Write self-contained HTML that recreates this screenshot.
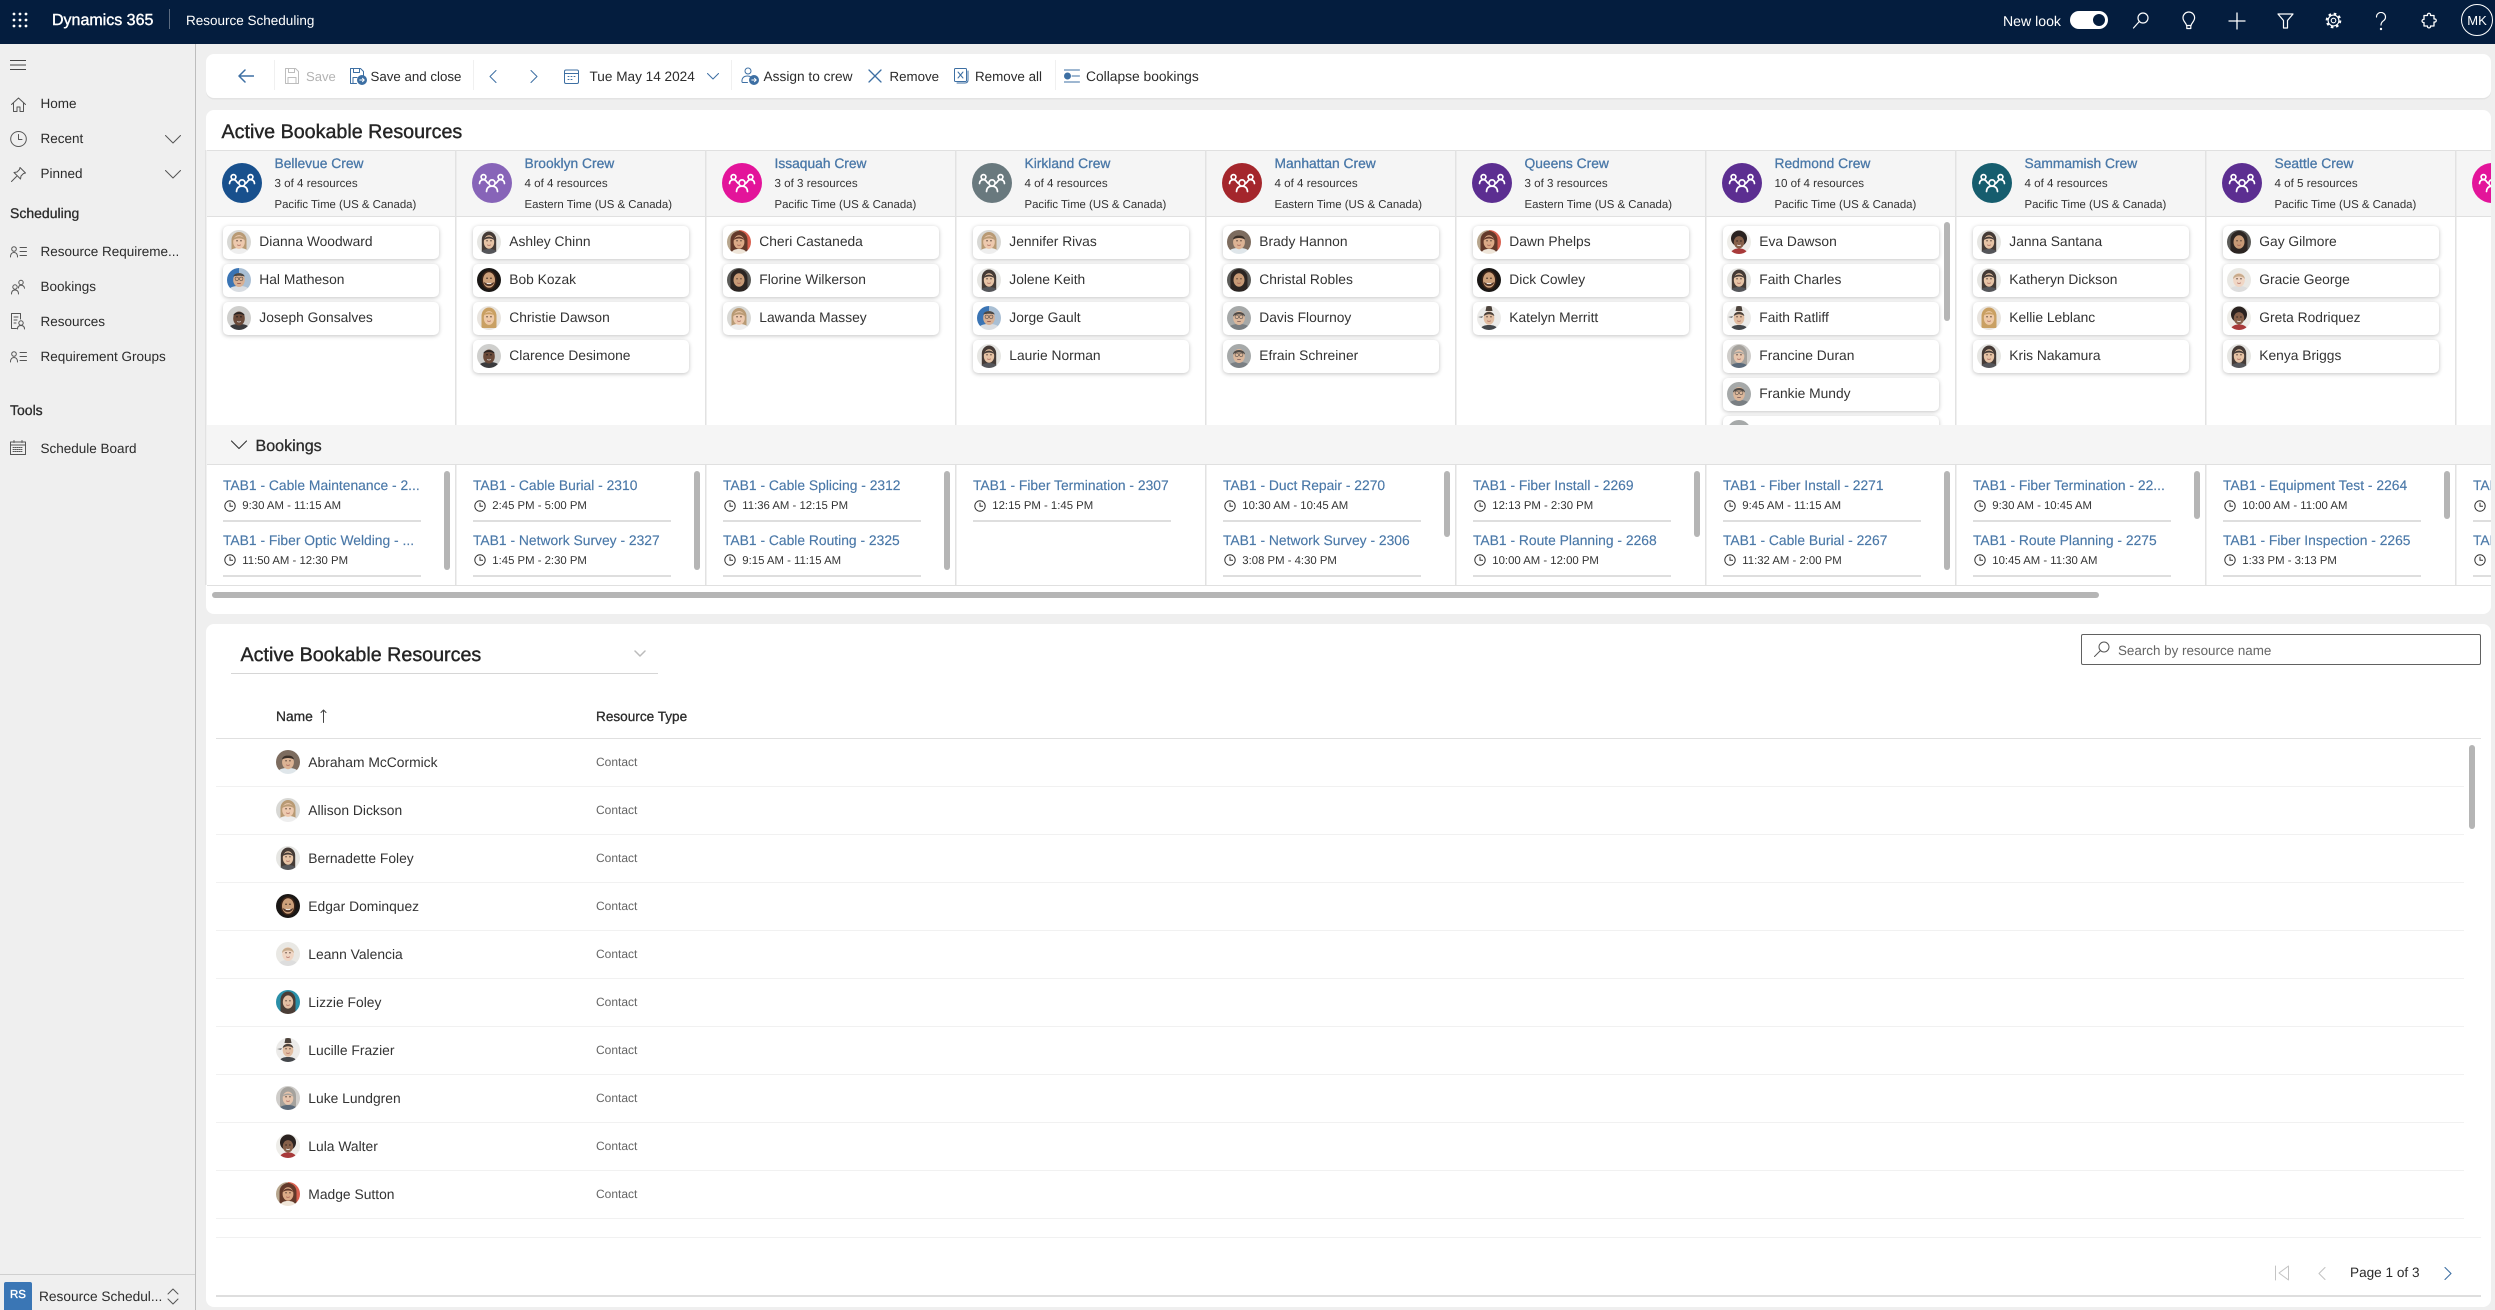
<!DOCTYPE html>
<html lang="en"><head><meta charset="utf-8"><title>Resource Scheduling</title>
<style>
html,body{margin:0;padding:0}
body{position:relative;width:2495px;height:1310px;overflow:hidden;background:#efefef;font-family:"Liberation Sans",sans-serif;color:#2b2b2b;text-rendering:geometricPrecision}
div,svg,span{position:absolute}
.t{white-space:nowrap;line-height:20px}
.sb{-webkit-text-stroke:.3px currentColor}
.n{font-size:13.5px;left:40.5px}
.tb{font-size:13.4px;top:66.5px}
.i{fill:none;stroke-linecap:round;stroke-linejoin:round}
.col{top:150px;width:250px;height:435px}
.ca{left:15px;top:13px;width:40px;height:40px;border-radius:50%}
.ca svg{left:0;top:0}
.cn{left:67.5px;top:3.5px;font-size:13.8px;color:#4a78a8}
.cr{left:67.5px;top:24px;font-size:11.6px;color:#333}
.cz{left:67.5px;top:44.5px;font-size:11.4px;color:#333}
.res{left:0;top:66px;width:248px;height:209px;overflow:hidden}
.card{left:15.5px;width:216px;height:33px;background:#fff;border-radius:5px;box-shadow:0 1px 4px rgba(0,0,0,.24)}
.av{width:24px;height:24px;clip-path:circle(50%);filter:blur(.35px)}
.card .av{left:4.5px;top:4px}
.card .t{left:36.8px;top:5.5px;font-size:13.8px;color:#333}
.bk{left:0;top:315px;width:250px;height:120px}
.bt{left:16px;font-size:13.85px;color:#4a78a8;-webkit-text-stroke:.15px currentColor}
.bd{left:35.3px;font-size:11.35px;color:#333}
.ck{left:17px;width:12px;height:12px}
.ru{left:16px;width:198px;height:2px;background:#dedede}
.sc{left:236.6px;top:6px;width:6px;background:#b5b5b5;border-radius:3px}
.hl{left:216px;width:2248px;height:1px;background:#f1f1f1}
.ra{left:276px}
.rn{left:308.3px;font-size:13.85px;color:#333}
.rt{left:596px;font-size:12px;color:#666}
</style></head><body>
<svg width="0" height="0" style="left:0;top:0">
<defs>
<g id="ey"><path d="M9.2 10.8h1.7M13.1 10.8h1.700" stroke="#4a362c" stroke-width=".8"/><path d="M10.200 14.800q1.800 1 3.600 0" stroke="#a0564f" stroke-width=".7" fill="none"/></g>
<g id="gl"><circle cx="9.800" cy="10.800" r="1.800" fill="none" stroke="#333" stroke-width=".5"/><circle cx="14.200" cy="10.800" r="1.800" fill="none" stroke="#333" stroke-width=".5"/></g>
<symbol id="gp" viewBox="0 0 40 40"><g fill="none" stroke="#fff" stroke-width="1.7" stroke-linecap="round"><circle cx="11.5" cy="14" r="2.4"/><circle cx="28.5" cy="14" r="2.4"/><circle cx="20" cy="20" r="3.1"/><path d="M7.5 20.5c.2-2.600 1.800-3.800 4-3.800 1.500 0 2.500.8 3.300 2.200l1.200 1.300M32.500 20.500c-.2-2.600-1.800-3.800-4-3.800-1.500 0-2.500.8-3.300 2.200L24 20.200M14.500 28.500c.2-3.500 2.200-5.300 5.500-5.300s5.300 1.800 5.500 5.300"/></g></symbol>
<symbol id="clk" viewBox="0 0 12 12"><circle cx="6" cy="6" r="5.200" fill="none" stroke="#333" stroke-width="1"/><path d="M6 2.800V6.300H9" fill="none" stroke="#333" stroke-width="1"/></symbol>
<symbol id="wl" viewBox="0 0 24 24"><rect width="24" height="24" fill="#d8d8d5"/><path d="M4.500 20V10a7.500 8 0 0 1 15 0v10z" fill="#b89a74"/><path d="M2 24c1-5 5-6 10-6s9 1 10 6z" fill="#eee"/><ellipse cx="12" cy="12" rx="5.800" ry="6.900" fill="#edc9ae"/><path d="M6.300 10c1-4.500 10-5.500 11.400 0-3.500-2.200-8-2.200-11.400 0z" fill="#b89a74"/><use href="#ey"/></symbol>
<symbol id="wp" viewBox="0 0 24 24"><rect width="24" height="24" fill="#e9e8e4"/><path d="M2 24c1-5 5-6 10-6s9 1 10 6z" fill="#ddd"/><ellipse cx="12" cy="12" rx="5.800" ry="7" fill="#f0d6c4"/><path d="M6 11c0-6.500 11-7.500 12 0-2.500-3-9-3.500-12 0z" fill="#c8ab8c"/><use href="#ey"/></symbol>
<symbol id="wy" viewBox="0 0 24 24"><rect width="24" height="24" fill="#e8e4df"/><path d="M4.500 22V10a7.500 8.500 0 0 1 15 0v12z" fill="#c9a063"/><ellipse cx="12" cy="12" rx="5.200" ry="6.900" fill="#eec9a6"/><path d="M6.800 9c2-3.500 8.500-3.500 10.400 0-2.500-1-8-1-10.400 0z" fill="#c9a063"/><use href="#ey"/></symbol>
<symbol id="wd" viewBox="0 0 24 24"><rect width="24" height="24" fill="#e6e6e3"/><path d="M4.800 21V9.500a7.200 8 0 0 1 14.400 0V21z" fill="#453b36"/><path d="M3 24c1-4 5-5 9-5s8 1 9 5z" fill="#55565a"/><ellipse cx="12" cy="12" rx="5.200" ry="6.800" fill="#e6c3a5"/><path d="M6.700 10c1-4.500 9-4.500 10.600 0-3.500-2-7-2-10.600 0z" fill="#453b36"/><use href="#ey"/></symbol>
<symbol id="wa" viewBox="0 0 24 24"><rect width="24" height="24" fill="#5b5b58"/><path d="M3.500 23V10a8.500 9 0 0 1 17 0v13z" fill="#2c2522"/><ellipse cx="12" cy="12" rx="5.500" ry="6.800" fill="#c79a76"/><use href="#ey"/></symbol>
<symbol id="wb" viewBox="0 0 24 24"><rect x="12" width="12" height="24" fill="#d9604f"/><rect width="12" height="24" fill="#b7a68e"/><path d="M3.500 22V10a8.500 9 0 0 1 17 0v12z" fill="#63392a"/><path d="M4 24c1-4 4-5 8-5s7 1 8 5z" fill="#efe5d8"/><ellipse cx="12" cy="12" rx="5.400" ry="6.700" fill="#dcaa87"/><path d="M6.800 10c1-4.500 9-4.500 10.400 0-3-2-7.400-2-10.400 0z" fill="#63392a"/><use href="#ey"/></symbol>
<symbol id="mg" viewBox="0 0 24 24"><rect width="12" height="24" fill="#3a74b4"/><rect x="12" width="12" height="24" fill="#a9bfd4"/><path d="M1 24c1-5 5-6 11-6s10 1 11 6z" fill="#d9dde2"/><ellipse cx="12" cy="12" rx="5.800" ry="7" fill="#d8b093"/><path d="M6.300 8.500c1-4.500 10.400-4.500 11.400 0-3.500-1-8-1-11.400 0z" fill="#4a4846"/><use href="#gl"/><path d="M10.200 15.200q1.800.8 3.600 0" stroke="#844" stroke-width=".7" fill="none"/></symbol>
<symbol id="mb" viewBox="0 0 24 24"><rect width="24" height="24" fill="#cfcfcd"/><path d="M1 24c1-5 5-6 11-6s10 1 11 6z" fill="#3a3a3c"/><ellipse cx="12" cy="12.500" rx="5.800" ry="7" fill="#6a4a39"/><path d="M6.300 9.500c1-4.500 10.400-4.500 11.400 0-3.500-2-8-2-11.400 0z" fill="#2a2422"/><path d="M9.200 10.800h1.700M13.100 10.800h1.700" stroke="#111" stroke-width=".8"/><path d="M10.200 15.500q1.800 1 3.600 0" stroke="#ddd" stroke-width=".8" fill="none"/></symbol>
<symbol id="mk" viewBox="0 0 24 24"><rect width="24" height="24" fill="#1a1715"/><ellipse cx="12" cy="12" rx="7.500" ry="9.500" fill="#3a2317"/><ellipse cx="12" cy="12" rx="6" ry="7.800" fill="#cda07a"/><path d="M6.800 14c1 5.500 9.400 5.500 10.400 0-2.500 2-8 2-10.400 0z" fill="#54382a"/><path d="M9.200 10.200h1.700M13.100 10.200h1.700" stroke="#201510" stroke-width=".8"/><path d="M9.600 15q2.400 1.500 4.800 0" stroke="#fff" stroke-width=".8" fill="none"/></symbol>
<symbol id="mo" viewBox="0 0 24 24"><rect width="24" height="24" fill="#a6a9a9"/><path d="M1 24c1-5 5-6 11-6s10 1 11 6z" fill="#7a7f83"/><ellipse cx="12" cy="12" rx="5.800" ry="7" fill="#dbb79b"/><path d="M6 10.500c.2-6 11.800-6 12 0-3.500-2.800-8.500-2.800-12 0z" fill="#4f4a46"/><use href="#gl"/><path d="M10.200 15.200q1.800.8 3.600 0" stroke="#755" stroke-width=".7" fill="none"/></symbol>
<symbol id="ma" viewBox="0 0 24 24"><rect width="24" height="24" fill="#7d6c5f"/><path d="M1 24c1-5 5-6 11-6s10 1 11 6z" fill="#dfe6ea"/><ellipse cx="12" cy="12.200" rx="5.900" ry="7" fill="#dcb394"/><path d="M6 9.500c.5-5.500 11.500-5.500 12 0-3.500-2-8.500-2-12 0z" fill="#3a2f28"/><use href="#ey"/></symbol>
<symbol id="ww" viewBox="0 0 24 24"><rect width="24" height="24" fill="#ecebe9"/><path d="M3 24c1-4 5-5 9-5s8 1 9 5z" fill="#44474b"/><path d="M8.500 5l1-5h5l1 5z" fill="#4c423b"/><path d="M1 11l5-1-1 2z" fill="#777"/><ellipse cx="12" cy="12" rx="5.300" ry="6.800" fill="#e2bea2"/><path d="M6.700 10c.5-5.500 10-5.500 10.600 0-3.500-2.400-7-2.400-10.600 0z" fill="#4c423b"/><use href="#ey"/></symbol>
<symbol id="wo" viewBox="0 0 24 24"><rect width="24" height="24" fill="#cfcdca"/><path d="M4 21V10a8 9 0 0 1 16 0v11z" fill="#a5a29d"/><path d="M2 24c2-4 6-5 10-5s8 1 10 5z" fill="#5b6a7a"/><ellipse cx="12" cy="12.200" rx="5.300" ry="6.600" fill="#e6c5ad"/><path d="M6.800 10.500c1-4 9-4 10.400 0-3.500-2-7-2-10.400 0z" fill="#a5a29d"/><use href="#ey"/></symbol>
<symbol id="ab" viewBox="0 0 24 24"><rect width="24" height="24" fill="#eeede9"/><path d="M3 24c2-5 6-5.500 9-5.500s7 .5 9 5.500z" fill="#a83a3a"/><circle cx="12" cy="8.500" r="8" fill="#2a2220"/><ellipse cx="12" cy="12.300" rx="5.200" ry="6.200" fill="#86604a"/><path d="M9.300 11h1.600M13.100 11h1.600" stroke="#111" stroke-width=".8"/><path d="M10.200 15q1.800 1 3.600 0" stroke="#fff" stroke-width=".8" fill="none"/></symbol>
<symbol id="tl" viewBox="0 0 24 24"><rect width="24" height="24" fill="#2a8fa8"/><path d="M4.500 24V10a7.500 8.500 0 0 1 15 0v14z" fill="#4a3d36"/><ellipse cx="12" cy="12" rx="5.200" ry="6.600" fill="#e3bfa4"/><use href="#ey"/></symbol>
</defs></svg>

<!-- top bar -->
<div style="left:0;top:0;width:2495px;height:44px;background:#041d3e"></div>
<svg style="left:12px;top:12px" width="16" height="16" viewBox="0 0 16 16" fill="#fff"><circle cx="2" cy="2" r="1.400"/><circle cx="8" cy="2" r="1.400"/><circle cx="14" cy="2" r="1.400"/><circle cx="2" cy="8" r="1.400"/><circle cx="8" cy="8" r="1.400"/><circle cx="14" cy="8" r="1.400"/><circle cx="2" cy="14" r="1.400"/><circle cx="8" cy="14" r="1.400"/><circle cx="14" cy="14" r="1.400"/></svg>
<div class="t" style="left:52px;top:10.500px;font-size:16px;color:#fff;-webkit-text-stroke:.4px #fff">Dynamics 365</div>
<div style="left:169px;top:9px;width:1px;height:20px;background:#5b6b80"></div>
<div class="t" style="left:186px;top:11px;font-size:13.500px;color:#fff">Resource Scheduling</div>
<div class="t" style="left:2003px;top:11px;font-size:14.100px;color:#fff">New look</div>
<div style="left:2070px;top:11px;width:38px;height:18px;background:#fff;border-radius:9px"></div>
<div style="left:2093px;top:14px;width:12px;height:12px;background:#041d3e;border-radius:50%"></div>
<svg class="i" style="left:2132px;top:11px" width="18" height="18" viewBox="0 0 18 18" stroke="#fff" stroke-width="1.200"><circle cx="11" cy="7" r="5"/><path d="M7.300 10.500L1.500 17"/></svg>
<svg class="i" style="left:2181px;top:11px" width="16" height="19" viewBox="0 0 16 19" stroke="#fff" stroke-width="1.200"><path d="M5.500 14.500C5.300 12 2 10.500 2 6.800a5.800 5.800 0 0 1 11.600 0c0 3.700-3.300 5.200-3.500 7.700zM5.800 14.500v3h4v-3"/></svg>
<svg class="i" style="left:2228px;top:12px" width="18" height="18" viewBox="0 0 18 18" stroke="#fff" stroke-width="1.300"><path d="M9 1v16M1 9h16"/></svg>
<svg class="i" style="left:2277px;top:13px" width="17" height="16" viewBox="0 0 17 16" stroke="#fff" stroke-width="1.200"><path d="M1 1h15l-5.500 6.500V15h-4V7.500z"/></svg>
<svg style="left:2325px;top:12px" width="17" height="17" viewBox="0 0 17 17" fill="none" stroke="#fff"><circle cx="8.500" cy="8.500" r="2.300" stroke-width="1.100"/><circle cx="8.500" cy="8.500" r="5.400" stroke-width="1.100"/><circle cx="8.500" cy="8.500" r="6.800" stroke-width="2" stroke-dasharray="2.600 2.740"/></svg>
<svg class="i" style="left:2375px;top:12px" width="12" height="19" viewBox="0 0 12 19" stroke="#fff" stroke-width="1.200"><path d="M1.500 5a4.500 4.500 0 1 1 7 3.700C6.800 10 6 11 6 13"/><circle cx="6" cy="17" r=".6"/></svg>
<svg class="i" style="left:2421px;top:12px" width="16" height="17" viewBox="0 0 16 17" stroke="#fff" stroke-width="1.300"><path d="M6.500 3.500c-.6-3 3.600-3 3 0H13V7c3-.6 3 3.600 0 3v4H9.500c.6 2.500-3.600 2.500-3 0H3v-3.500c-2.600.6-2.600-3.600 0-3V3.500z"/></svg>
<div style="left:2461px;top:4px;width:30px;height:30px;border:1.300px solid #fff;border-radius:50%"></div>
<div class="t" style="left:2461px;top:11px;width:32px;text-align:center;font-size:13px;color:#fff">MK</div>

<!-- sidebar -->
<div style="left:0;top:44px;width:195px;height:1266px;background:#efefef;border-right:1px solid #bdbdbd"></div>
<svg class="i" style="left:10px;top:60px" width="16" height="10" viewBox="0 0 16 10" stroke="#444" stroke-width="1"><path d="M0 .5h16M0 5h16M0 9.500h16"/></svg>
<svg class="i" style="left:11px;top:97px" width="15" height="15" viewBox="0 0 15 15" stroke="#555" stroke-width="1"><path d="M.5 7.500L7.500 1l7 6.500M2.500 6v8.500h3.500V10h3v4.500h3.500V6"/></svg>
<div class="t n" style="top:94px">Home</div>
<svg class="i" style="left:10px;top:131px" width="17" height="16" viewBox="0 0 17 16" stroke="#555" stroke-width="1"><ellipse cx="8.500" cy="8" rx="7.800" ry="7.500"/><path d="M8.500 3.500V8.500H12"/></svg>
<div class="t n" style="top:129px">Recent</div>
<svg class="i" style="left:165px;top:135px" width="16" height="9" viewBox="0 0 16 9" stroke="#555" stroke-width="1"><path d="M.5.5L8 8 15.500.5"/></svg>
<svg class="i" style="left:11px;top:167px" width="15" height="15" viewBox="0 0 15 15" stroke="#555" stroke-width="1"><path d="M9 .5l5.500 5.500-2 .5-2.500 2.500-.5 3L3 5.500l3-.5 2.500-2.500zM5.500 9.500L.5 14.500"/></svg>
<div class="t n" style="top:164px">Pinned</div>
<svg class="i" style="left:165px;top:170px" width="16" height="9" viewBox="0 0 16 9" stroke="#555" stroke-width="1"><path d="M.5.5L8 8 15.500.5"/></svg>
<div class="t sb" style="left:10px;top:203px;font-size:14px;color:#2b2b2b">Scheduling</div>
<svg class="i" style="left:10px;top:246px" width="17" height="12" viewBox="0 0 17 12" stroke="#555" stroke-width="1"><circle cx="4" cy="3" r="2.300"/><path d="M.5 11c0-3 1.500-4.500 3.500-4.500S7.500 8 7.500 11M10 1.500h6.500M10 5.500h6.500M10 9.500h6.500"/></svg>
<div class="t n" style="top:242px">Resource Requireme...</div>
<svg class="i" style="left:11px;top:279px" width="15" height="16" viewBox="0 0 15 16" stroke="#555" stroke-width="1"><circle cx="4" cy="8" r="2.200"/><circle cx="10" cy="3.500" r="2.200"/><path d="M.5 15c0-3 1.500-4 3.500-4s3.500 1 3.500 4M7.500 9c0-2 1-2.800 2.500-2.800s3.500 1 3.500 3"/></svg>
<div class="t n" style="top:277px">Bookings</div>
<svg class="i" style="left:11px;top:313px" width="15" height="17" viewBox="0 0 15 17" stroke="#555" stroke-width="1"><path d="M9.500 6V.5H.5v15h5M3 4h4M3 7h3M3 10h2"/><circle cx="10" cy="10" r="2.200"/><path d="M6.500 16c0-2.500 1.500-3.500 3.500-3.500s3.500 1 3.500 3.500"/></svg>
<div class="t n" style="top:312px">Resources</div>
<svg class="i" style="left:10px;top:351px" width="17" height="12" viewBox="0 0 17 12" stroke="#555" stroke-width="1"><circle cx="4" cy="3" r="2.300"/><path d="M.5 11c0-3 1.500-4.500 3.500-4.500S7.500 8 7.500 11M10 1.500h6.500M10 5.500h6.500M10 9.500h6.500"/></svg>
<div class="t n" style="top:347px">Requirement Groups</div>
<div class="t sb" style="left:10px;top:400px;font-size:14px;color:#2b2b2b">Tools</div>
<svg class="i" style="left:10px;top:440px" width="16" height="15" viewBox="0 0 16 15" stroke="#555" stroke-width="1"><path d="M.5 2h15v12.500H.5zM.5 5h15M4 .5v2M12 .5v2"/><path d="M3 7.500h10M3 9.500h10M3 11.500h10" stroke-dasharray="1 1"/></svg>
<div class="t n" style="top:439px">Schedule Board</div>
<div style="left:0;top:1274px;width:195px;height:1px;background:#cfcfcf"></div>
<div style="left:4px;top:1282px;width:28px;height:28px;background:#3a76b5;border-radius:2px 2px 0 0"></div>
<div class="t" style="left:4px;top:1285px;width:28px;text-align:center;font-size:11.500px;color:#fff;-webkit-text-stroke:.35px #fff">RS</div>
<div class="t" style="left:39px;top:1286.500px;font-size:13.700px">Resource Schedul...</div>
<svg class="i" style="left:167px;top:1288px" width="12" height="17" viewBox="0 0 12 17" stroke="#555" stroke-width="1"><path d="M1 6l5-5 5 5M1 11l5 5 5-5"/></svg>

<!-- toolbar card -->
<div style="left:206px;top:54px;width:2285px;height:44px;background:#fff;border-radius:8px;box-shadow:0 1.500px 0 #e3e3e3"></div>
<svg class="i" style="left:238px;top:69px" width="16" height="14" viewBox="0 0 16 14" stroke="#3d6fa3" stroke-width="1.500"><path d="M7 1L1 7l6 6M1 7h14.500"/></svg>
<div style="left:274px;top:60px;width:1px;height:30px;background:#f0f0f0"></div>
<svg class="i" style="left:285px;top:68px" width="14" height="16" viewBox="0 0 14 16" stroke="#bdbdbd" stroke-width="1"><path d="M.5.5h10l3 3v12H.5zM3.500.5v4h6v-4M3 15.500v-6h8v6"/></svg>
<div class="t tb" style="left:306px;font-size:13.100px;color:#b3b3b3">Save</div>
<svg class="i" style="left:350px;top:68px" width="17" height="17" viewBox="0 0 17 17" stroke="#3d6fa3" stroke-width="1"><path d="M.5.5h10l3 3v5M.5.500v15h6M3.500.5v4h6v-4M3 15.500v-6h4"/><circle cx="12" cy="12" r="4.500" fill="#3d6fa3"/><path d="M9.800 12h4.200M12.500 10.300L14.200 12l-1.700 1.700" stroke="#fff"/></svg>
<div class="t tb" style="left:370.500px;font-size:13.300px">Save and close</div>
<div style="left:473px;top:60px;width:1px;height:30px;background:#f0f0f0"></div>
<svg class="i" style="left:489px;top:70px" width="8" height="13" viewBox="0 0 8 13" stroke="#3d6fa3" stroke-width="1"><path d="M7 .5L1 6.500l6 6"/></svg>
<svg class="i" style="left:530px;top:70px" width="8" height="13" viewBox="0 0 8 13" stroke="#3d6fa3" stroke-width="1"><path d="M1 .5l6 6-6 6"/></svg>
<svg class="i" style="left:564px;top:69px" width="15" height="15" viewBox="0 0 15 15" stroke="#3d6fa3" stroke-width="1"><rect x=".5" y="1" width="14" height="13.500" rx="1.500"/><path d="M.5 4.500h14M4 7.500h1M7 7.500h1M10 7.500h1M4 10.500h1M7 10.500h1"/></svg>
<div class="t tb" style="left:589.500px;top:67px;font-size:13.600px">Tue May 14 2024</div>
<svg class="i" style="left:707px;top:73px" width="12" height="7" viewBox="0 0 12 7" stroke="#3d6fa3" stroke-width="1"><path d="M.5.5L6 6l5.500-5.500"/></svg>
<div style="left:731px;top:60px;width:1px;height:30px;background:#f0f0f0"></div>
<svg class="i" style="left:741px;top:67px" width="18" height="18" viewBox="0 0 18 18" stroke="#3d6fa3" stroke-width="1"><circle cx="7" cy="4" r="3"/><path d="M1 15c-.5-4 2-6 5.500-6 1.500 0 2.500.3 3.500 1M1.500 15.500h5"/><circle cx="13" cy="13" r="4.500" fill="#3d6fa3"/><path d="M10.800 13H15M13.500 11.300l1.700 1.700-1.700 1.700" stroke="#fff"/></svg>
<div class="t tb" style="left:763.500px;font-size:13.700px">Assign to crew</div>
<svg class="i" style="left:868px;top:69px" width="14" height="14" viewBox="0 0 14 14" stroke="#3d6fa3" stroke-width="1.300"><path d="M1 1l12 12M13 1L1 13"/></svg>
<div class="t tb" style="left:889.500px;font-size:13.300px">Remove</div>
<svg class="i" style="left:954px;top:68px" width="15" height="16" viewBox="0 0 15 16" stroke="#3d6fa3" stroke-width="1"><rect x=".5" y=".5" width="12" height="13" rx="1"/><path d="M4 4l5 6M9 4l-5 6M14 3v9c0 2-1 3-3 3H3"/></svg>
<div class="t tb" style="left:975px">Remove all</div>
<div style="left:1054.500px;top:60px;width:1px;height:30px;background:#f0f0f0"></div>
<svg class="i" style="left:1064px;top:69px" width="16" height="14" viewBox="0 0 16 14" stroke="#3d6fa3" stroke-width="1"><circle cx="3.500" cy="7" r="3" fill="#3d6fa3"/><path d="M0 1h15.500M8 7h7.500M0 13h15.500"/></svg>
<div class="t tb" style="left:1086px;font-size:13.800px">Collapse bookings</div>

<!-- crews card -->
<div style="left:206px;top:110px;width:2285px;height:504px;background:#fff;border-radius:8px"></div>
<div class="t" style="left:221.500px;top:121.500px;font-size:19.700px;color:#242424;-webkit-text-stroke:.4px #242424">Active Bookable Resources</div>
<div style="left:207px;top:150px;width:2284px;height:65px;background:#f5f5f5;border-top:1px solid #e0e0e0;border-bottom:1px solid #e0e0e0"></div>
<div style="left:205px;top:150px;width:2286px;height:435px;background:repeating-linear-gradient(90deg,#e2e2e2 0 1.500px,transparent 1.500px 250px)"></div>
<div style="left:207px;top:425px;width:2284px;height:39px;background:#f5f5f5;border-bottom:1px solid #e0e0e0"></div>
<svg class="i" style="left:231px;top:440px" width="16" height="10" viewBox="0 0 16 10" stroke="#333" stroke-width="1.100"><path d="M.5 1L8 8.500 15.500 1"/></svg>
<div class="t sb" style="left:255.500px;top:436px;font-size:16.100px;color:#2b2b2b">Bookings</div>
<div style="left:207px;top:585px;width:2284px;height:1px;background:#e0e0e0"></div>

<div style="left:0;top:0;width:2491px;height:1310px;overflow:hidden">

<div class="col" style="left:207px">
<div class="ca" style="background:#18508d"><svg width="40" height="40"><use href="#gp"/></svg></div>
<div class="t cn sb">Bellevue Crew</div><div class="t cr">3 of 4 resources</div><div class="t cz">Pacific Time (US &amp; Canada)</div>
<div class="res">
<div class="card" style="top:10px"><svg class="av"><use href="#wl"/></svg><div class="t">Dianna Woodward</div></div>
<div class="card" style="top:48px"><svg class="av"><use href="#mg"/></svg><div class="t">Hal Matheson</div></div>
<div class="card" style="top:86px"><svg class="av"><use href="#mb"/></svg><div class="t">Joseph Gonsalves</div></div>
</div>
<div class="bk">
<div class="t bt" style="top:10px">TAB1 - Cable Maintenance - 2...</div><svg class="ck" style="top:35px"><use href="#clk"/></svg><div class="t bd" style="top:31px">9:30 AM - 11:15 AM</div><div class="ru" style="top:55px"></div>
<div class="t bt" style="top:65px">TAB1 - Fiber Optic Welding - ...</div><svg class="ck" style="top:89px"><use href="#clk"/></svg><div class="t bd" style="top:85.500px">11:50 AM - 12:30 PM</div><div class="ru" style="top:110px"></div>
<div class="sc" style="height:99px"></div>
</div></div>

<div class="col" style="left:457px">
<div class="ca" style="background:#8764b8"><svg width="40" height="40"><use href="#gp"/></svg></div>
<div class="t cn sb">Brooklyn Crew</div><div class="t cr">4 of 4 resources</div><div class="t cz">Eastern Time (US &amp; Canada)</div>
<div class="res">
<div class="card" style="top:10px"><svg class="av"><use href="#wd"/></svg><div class="t">Ashley Chinn</div></div>
<div class="card" style="top:48px"><svg class="av"><use href="#mk"/></svg><div class="t">Bob Kozak</div></div>
<div class="card" style="top:86px"><svg class="av"><use href="#wy"/></svg><div class="t">Christie Dawson</div></div>
<div class="card" style="top:124px"><svg class="av"><use href="#mb"/></svg><div class="t">Clarence Desimone</div></div>
</div>
<div class="bk">
<div class="t bt" style="top:10px">TAB1 - Cable Burial - 2310</div><svg class="ck" style="top:35px"><use href="#clk"/></svg><div class="t bd" style="top:31px">2:45 PM - 5:00 PM</div><div class="ru" style="top:55px"></div>
<div class="t bt" style="top:65px">TAB1 - Network Survey - 2327</div><svg class="ck" style="top:89px"><use href="#clk"/></svg><div class="t bd" style="top:85.500px">1:45 PM - 2:30 PM</div><div class="ru" style="top:110px"></div>
<div class="sc" style="height:99px"></div>
</div></div>

<div class="col" style="left:707px">
<div class="ca" style="background:#e3149a"><svg width="40" height="40"><use href="#gp"/></svg></div>
<div class="t cn sb">Issaquah Crew</div><div class="t cr">3 of 3 resources</div><div class="t cz">Pacific Time (US &amp; Canada)</div>
<div class="res">
<div class="card" style="top:10px"><svg class="av"><use href="#wb"/></svg><div class="t">Cheri Castaneda</div></div>
<div class="card" style="top:48px"><svg class="av"><use href="#wa"/></svg><div class="t">Florine Wilkerson</div></div>
<div class="card" style="top:86px"><svg class="av"><use href="#wl"/></svg><div class="t">Lawanda Massey</div></div>
</div>
<div class="bk">
<div class="t bt" style="top:10px">TAB1 - Cable Splicing - 2312</div><svg class="ck" style="top:35px"><use href="#clk"/></svg><div class="t bd" style="top:31px">11:36 AM - 12:15 PM</div><div class="ru" style="top:55px"></div>
<div class="t bt" style="top:65px">TAB1 - Cable Routing - 2325</div><svg class="ck" style="top:89px"><use href="#clk"/></svg><div class="t bd" style="top:85.500px">9:15 AM - 11:15 AM</div><div class="ru" style="top:110px"></div>
<div class="sc" style="height:99px"></div>
</div></div>

<div class="col" style="left:957px">
<div class="ca" style="background:#69797e"><svg width="40" height="40"><use href="#gp"/></svg></div>
<div class="t cn sb">Kirkland Crew</div><div class="t cr">4 of 4 resources</div><div class="t cz">Pacific Time (US &amp; Canada)</div>
<div class="res">
<div class="card" style="top:10px"><svg class="av"><use href="#wl"/></svg><div class="t">Jennifer Rivas</div></div>
<div class="card" style="top:48px"><svg class="av"><use href="#wd"/></svg><div class="t">Jolene Keith</div></div>
<div class="card" style="top:86px"><svg class="av"><use href="#mg"/></svg><div class="t">Jorge Gault</div></div>
<div class="card" style="top:124px"><svg class="av"><use href="#wd"/></svg><div class="t">Laurie Norman</div></div>
</div>
<div class="bk">
<div class="t bt" style="top:10px">TAB1 - Fiber Termination - 2307</div><svg class="ck" style="top:35px"><use href="#clk"/></svg><div class="t bd" style="top:31px">12:15 PM - 1:45 PM</div><div class="ru" style="top:55px"></div>
</div></div>

<div class="col" style="left:1207px">
<div class="ca" style="background:#a4262c"><svg width="40" height="40"><use href="#gp"/></svg></div>
<div class="t cn sb">Manhattan Crew</div><div class="t cr">4 of 4 resources</div><div class="t cz">Eastern Time (US &amp; Canada)</div>
<div class="res">
<div class="card" style="top:10px"><svg class="av"><use href="#ma"/></svg><div class="t">Brady Hannon</div></div>
<div class="card" style="top:48px"><svg class="av"><use href="#wa"/></svg><div class="t">Christal Robles</div></div>
<div class="card" style="top:86px"><svg class="av"><use href="#mo"/></svg><div class="t">Davis Flournoy</div></div>
<div class="card" style="top:124px"><svg class="av"><use href="#mo"/></svg><div class="t">Efrain Schreiner</div></div>
</div>
<div class="bk">
<div class="t bt" style="top:10px">TAB1 - Duct Repair - 2270</div><svg class="ck" style="top:35px"><use href="#clk"/></svg><div class="t bd" style="top:31px">10:30 AM - 10:45 AM</div><div class="ru" style="top:55px"></div>
<div class="t bt" style="top:65px">TAB1 - Network Survey - 2306</div><svg class="ck" style="top:89px"><use href="#clk"/></svg><div class="t bd" style="top:85.500px">3:08 PM - 4:30 PM</div><div class="ru" style="top:110px"></div>
<div class="sc" style="height:66px"></div>
</div></div>

<div class="col" style="left:1457px">
<div class="ca" style="background:#5c2e91"><svg width="40" height="40"><use href="#gp"/></svg></div>
<div class="t cn sb">Queens Crew</div><div class="t cr">3 of 3 resources</div><div class="t cz">Eastern Time (US &amp; Canada)</div>
<div class="res">
<div class="card" style="top:10px"><svg class="av"><use href="#wb"/></svg><div class="t">Dawn Phelps</div></div>
<div class="card" style="top:48px"><svg class="av"><use href="#mk"/></svg><div class="t">Dick Cowley</div></div>
<div class="card" style="top:86px"><svg class="av"><use href="#ww"/></svg><div class="t">Katelyn Merritt</div></div>
</div>
<div class="bk">
<div class="t bt" style="top:10px">TAB1 - Fiber Install - 2269</div><svg class="ck" style="top:35px"><use href="#clk"/></svg><div class="t bd" style="top:31px">12:13 PM - 2:30 PM</div><div class="ru" style="top:55px"></div>
<div class="t bt" style="top:65px">TAB1 - Route Planning - 2268</div><svg class="ck" style="top:89px"><use href="#clk"/></svg><div class="t bd" style="top:85.500px">10:00 AM - 12:00 PM</div><div class="ru" style="top:110px"></div>
<div class="sc" style="height:66px"></div>
</div></div>

<div class="col" style="left:1707px">
<div class="ca" style="background:#5c2e91"><svg width="40" height="40"><use href="#gp"/></svg></div>
<div class="t cn sb">Redmond Crew</div><div class="t cr">10 of 4 resources</div><div class="t cz">Pacific Time (US &amp; Canada)</div>
<div class="res">
<div class="card" style="top:10px"><svg class="av"><use href="#ab"/></svg><div class="t">Eva Dawson</div></div>
<div class="card" style="top:48px"><svg class="av"><use href="#wd"/></svg><div class="t">Faith Charles</div></div>
<div class="card" style="top:86px"><svg class="av"><use href="#ww"/></svg><div class="t">Faith Ratliff</div></div>
<div class="card" style="top:124px"><svg class="av"><use href="#wo"/></svg><div class="t">Francine Duran</div></div>
<div class="card" style="top:162px"><svg class="av"><use href="#mo"/></svg><div class="t">Frankie Mundy</div></div>
<div class="card" style="top:200px"><svg class="av"><use href="#mo"/></svg></div>
<div class="sc" style="top:6px;height:99px"></div>
</div>
<div class="bk">
<div class="t bt" style="top:10px">TAB1 - Fiber Install - 2271</div><svg class="ck" style="top:35px"><use href="#clk"/></svg><div class="t bd" style="top:31px">9:45 AM - 11:15 AM</div><div class="ru" style="top:55px"></div>
<div class="t bt" style="top:65px">TAB1 - Cable Burial - 2267</div><svg class="ck" style="top:89px"><use href="#clk"/></svg><div class="t bd" style="top:85.500px">11:32 AM - 2:00 PM</div><div class="ru" style="top:110px"></div>
<div class="sc" style="height:99px"></div>
</div></div>

<div class="col" style="left:1957px">
<div class="ca" style="background:#165d6e"><svg width="40" height="40"><use href="#gp"/></svg></div>
<div class="t cn sb">Sammamish Crew</div><div class="t cr">4 of 4 resources</div><div class="t cz">Pacific Time (US &amp; Canada)</div>
<div class="res">
<div class="card" style="top:10px"><svg class="av"><use href="#wd"/></svg><div class="t">Janna Santana</div></div>
<div class="card" style="top:48px"><svg class="av"><use href="#wd"/></svg><div class="t">Katheryn Dickson</div></div>
<div class="card" style="top:86px"><svg class="av"><use href="#wy"/></svg><div class="t">Kellie Leblanc</div></div>
<div class="card" style="top:124px"><svg class="av"><use href="#wd"/></svg><div class="t">Kris Nakamura</div></div>
</div>
<div class="bk">
<div class="t bt" style="top:10px">TAB1 - Fiber Termination - 22...</div><svg class="ck" style="top:35px"><use href="#clk"/></svg><div class="t bd" style="top:31px">9:30 AM - 10:45 AM</div><div class="ru" style="top:55px"></div>
<div class="t bt" style="top:65px">TAB1 - Route Planning - 2275</div><svg class="ck" style="top:89px"><use href="#clk"/></svg><div class="t bd" style="top:85.500px">10:45 AM - 11:30 AM</div><div class="ru" style="top:110px"></div>
<div class="sc" style="height:48px"></div>
</div></div>

<div class="col" style="left:2207px">
<div class="ca" style="background:#5c2e91"><svg width="40" height="40"><use href="#gp"/></svg></div>
<div class="t cn sb">Seattle Crew</div><div class="t cr">4 of 5 resources</div><div class="t cz">Pacific Time (US &amp; Canada)</div>
<div class="res">
<div class="card" style="top:10px"><svg class="av"><use href="#wa"/></svg><div class="t">Gay Gilmore</div></div>
<div class="card" style="top:48px"><svg class="av"><use href="#wp"/></svg><div class="t">Gracie George</div></div>
<div class="card" style="top:86px"><svg class="av"><use href="#ab"/></svg><div class="t">Greta Rodriquez</div></div>
<div class="card" style="top:124px"><svg class="av"><use href="#wd"/></svg><div class="t">Kenya Briggs</div></div>
</div>
<div class="bk">
<div class="t bt" style="top:10px">TAB1 - Equipment Test - 2264</div><svg class="ck" style="top:35px"><use href="#clk"/></svg><div class="t bd" style="top:31px">10:00 AM - 11:00 AM</div><div class="ru" style="top:55px"></div>
<div class="t bt" style="top:65px">TAB1 - Fiber Inspection - 2265</div><svg class="ck" style="top:89px"><use href="#clk"/></svg><div class="t bd" style="top:85.500px">1:33 PM - 3:13 PM</div><div class="ru" style="top:110px"></div>
<div class="sc" style="height:48px"></div>
</div></div>

<div class="col" style="left:2457px">
<div class="ca" style="background:#e3149a"><svg width="40" height="40"><use href="#gp"/></svg></div>
<div class="bk">
<div class="t bt" style="top:10px">TAB1</div><svg class="ck" style="top:35px"><use href="#clk"/></svg><div class="ru" style="top:55px"></div>
<div class="t bt" style="top:65px">TAB1</div><svg class="ck" style="top:89px"><use href="#clk"/></svg><div class="ru" style="top:110px"></div>
</div></div>
</div>

<div style="left:212px;top:592px;width:1887px;height:6px;background:#b5b5b5;border-radius:3px"></div>

<!-- table card -->
<div style="left:206px;top:624px;width:2285px;height:683px;background:#fff;border-radius:8px"></div>
<div class="t" style="left:240.500px;top:645px;font-size:19.700px;color:#242424;-webkit-text-stroke:.4px #242424">Active Bookable Resources</div>
<svg class="i" style="left:634px;top:650px" width="12" height="8" viewBox="0 0 12 8" stroke="#bbb" stroke-width="1.500"><path d="M1 1l5 5 5-5"/></svg>
<div style="left:231px;top:673px;width:427px;height:1px;background:#d6d6d6"></div>
<div style="left:2081px;top:634px;width:398px;height:29px;border:1px solid #616161;border-radius:2px;background:#fff"></div>
<svg class="i" style="left:2094px;top:641px" width="16" height="16" viewBox="0 0 16 16" stroke="#555" stroke-width="1"><circle cx="10" cy="6" r="5"/><path d="M6.500 9.500L.5 15.500"/></svg>
<div class="t" style="left:2118px;top:640.500px;font-size:13.400px;color:#666">Search by resource name</div>
<div class="t sb" style="left:276px;top:706.500px;font-size:13.800px;color:#2b2b2b">Name</div>
<svg class="i" style="left:320px;top:709px" width="7" height="14" viewBox="0 0 7 14" stroke="#444" stroke-width="1"><path d="M3.500 13.500V1M1 3.500L3.500 1 6 3.500"/></svg>
<div class="t sb" style="left:596px;top:706.500px;font-size:13.600px;color:#2b2b2b">Resource Type</div>
<div style="left:216px;top:738px;width:2265px;height:1px;background:#e0e0e0"></div>

<div class="hl" style="top:786px"></div><div class="hl" style="top:834px"></div><div class="hl" style="top:882px"></div><div class="hl" style="top:930px"></div><div class="hl" style="top:978px"></div><div class="hl" style="top:1026px"></div><div class="hl" style="top:1074px"></div><div class="hl" style="top:1122px"></div><div class="hl" style="top:1170px"></div><div class="hl" style="top:1218px"></div>
<div class="hl" style="top:1237px;width:2265px"></div>

<svg class="av ra" style="top:750px"><use href="#ma"/></svg><div class="t rn" style="top:752px">Abraham McCormick</div><div class="t rt" style="top:752px">Contact</div>
<svg class="av ra" style="top:798px"><use href="#wl"/></svg><div class="t rn" style="top:800px">Allison Dickson</div><div class="t rt" style="top:800px">Contact</div>
<svg class="av ra" style="top:846px"><use href="#wd"/></svg><div class="t rn" style="top:848px">Bernadette Foley</div><div class="t rt" style="top:848px">Contact</div>
<svg class="av ra" style="top:894px"><use href="#mk"/></svg><div class="t rn" style="top:896px">Edgar Dominquez</div><div class="t rt" style="top:896px">Contact</div>
<svg class="av ra" style="top:942px"><use href="#wp"/></svg><div class="t rn" style="top:944px">Leann Valencia</div><div class="t rt" style="top:944px">Contact</div>
<svg class="av ra" style="top:990px"><use href="#tl"/></svg><div class="t rn" style="top:992px">Lizzie Foley</div><div class="t rt" style="top:992px">Contact</div>
<svg class="av ra" style="top:1038px"><use href="#ww"/></svg><div class="t rn" style="top:1040px">Lucille Frazier</div><div class="t rt" style="top:1040px">Contact</div>
<svg class="av ra" style="top:1086px"><use href="#wo"/></svg><div class="t rn" style="top:1088px">Luke Lundgren</div><div class="t rt" style="top:1088px">Contact</div>
<svg class="av ra" style="top:1134px"><use href="#ab"/></svg><div class="t rn" style="top:1136px">Lula Walter</div><div class="t rt" style="top:1136px">Contact</div>
<svg class="av ra" style="top:1182px"><use href="#wb"/></svg><div class="t rn" style="top:1184px">Madge Sutton</div><div class="t rt" style="top:1184px">Contact</div>

<div style="left:2469px;top:745px;width:6px;height:84px;background:#b5b5b5;border-radius:3px"></div>

<svg class="i" style="left:2275px;top:1265px" width="15" height="16" viewBox="0 0 15 16" stroke="#c4c4c4" stroke-width="1"><path d="M.5 1v14M13.500 1L4 8l9.500 7z"/></svg>
<svg class="i" style="left:2318px;top:1267px" width="8" height="13" viewBox="0 0 8 13" stroke="#c4c4c4" stroke-width="1.100"><path d="M7 .5L1 6.500l6 6"/></svg>
<div class="t" style="left:2350px;top:1263px;font-size:13.600px;color:#2b2b2b">Page 1 of 3</div>
<svg class="i" style="left:2444px;top:1267px" width="8" height="13" viewBox="0 0 8 13" stroke="#3d6fa3" stroke-width="1.100"><path d="M1 .5l6 6-6 6"/></svg>
<div style="left:216px;top:1295px;width:2265px;height:2px;background:#dedede"></div>
</body></html>
